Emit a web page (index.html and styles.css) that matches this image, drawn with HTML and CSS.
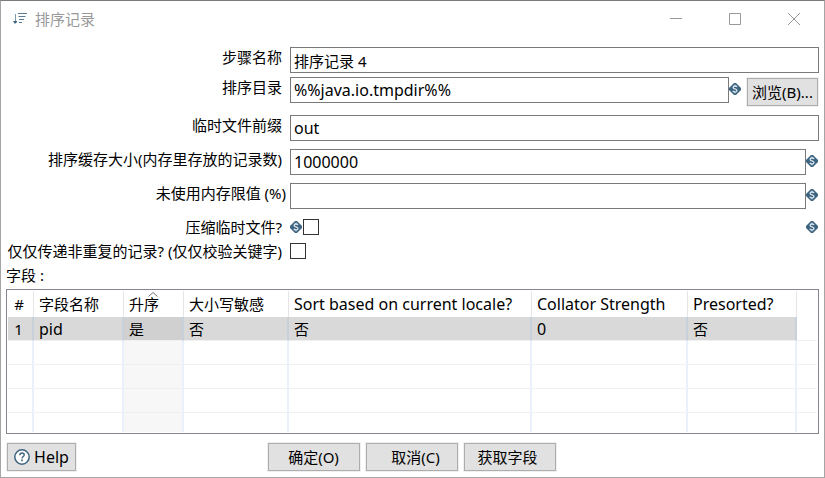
FILE: index.html
```html
<!DOCTYPE html>
<html lang="zh-CN">
<head>
    <meta charset="UTF-8">
    <meta name="viewport" content="width=device-width, initial-scale=1.0">
    <title>排序记录</title>
    <link rel="stylesheet" href="styles.css">
</head>
<body>

    <!-- Shared icon: variable marker -->
    <svg class="symbols" aria-hidden="true">
        <symbol id="var" viewBox="0 0 12 12">
            <path d="M5 0h2l5 5v2l-5 5H5L0 7V5z" fill="#3d6480"/>
            <path d="M8 4C7.600 3.200 6.900 3 6 3C4.900 3 4.100 3.500 4.100 4.400C4.100 6.300 8 5.500 8 7.500C8 8.500 7.100 9 6 9C5 9 4.200 8.600 3.900 7.800M6 1.800V3M6 9v1.200" fill="none" stroke="#dbe6ee" stroke-width="1.300"/>
        </symbol>
    </svg>

    <div class="dialog">
        <!-- Title bar -->
        <div class="titlebar">
            <svg class="app-icon" viewBox="0 0 14 12">
                <path d="M2.500 1v8.500" stroke="#7d9ab0" fill="none"/>
                <path d="M0 8h4v1L2.500 10.500h-1z" fill="#3d6480"/>
                <path d="M5 .5h9M5.500 3.500h7M6 6.500h5M6 9.500h3" stroke="#5b7c95" fill="none"/>
            </svg>
            <span class="title">排序记录</span>
            <button class="win-btn" aria-label="最小化"><svg viewBox="0 0 12 12"><path d="M0 5.500h12"/></svg></button>
            <button class="win-btn" aria-label="最大化"><svg viewBox="0 0 12 12"><path d="M.5.5h11v11H.5z"/></svg></button>
            <button class="win-btn" aria-label="关闭"><svg viewBox="0 0 12 12"><path d="M0 0l12 12M12 0L0 12"/></svg></button>
        </div>

        <!-- Step settings -->
        <div class="form">
            <div class="row row-tight">
                <label for="stepName">步骤名称</label>
                <input type="text" id="stepName" value="排序记录 4">
            </div>
            <div class="row">
                <label for="sortDir">排序目录</label>
                <input type="text" id="sortDir" class="latin" value="%%java.io.tmpdir%%">
                <svg class="var"><use href="#var"/></svg>
                <button class="btn browse">浏览(B)...</button>
            </div>
            <div class="row">
                <label for="prefix">临时文件前缀</label>
                <input type="text" id="prefix" class="latin" value="out">
            </div>
            <div class="row">
                <label for="sortSize">排序缓存大小(内存里存放的记录数)</label>
                <input type="text" id="sortSize" class="latin" value="1000000">
                <svg class="var var-end"><use href="#var"/></svg>
            </div>
            <div class="row">
                <label for="freeMem" class="wide">未使用内存限值 (%)</label>
                <input type="text" id="freeMem" class="latin" value="">
                <svg class="var var-end"><use href="#var"/></svg>
            </div>
            <div class="row row-check">
                <label for="compress">压缩临时文件?</label>
                <svg class="var"><use href="#var"/></svg>
                <input type="checkbox" id="compress">
                <svg class="var var-end"><use href="#var"/></svg>
            </div>
            <div class="row row-check">
                <label for="unique">仅仅传递非重复的记录? (仅仅校验关键字)</label>
                <input type="checkbox" id="unique">
            </div>
        </div>

        <!-- Fields grid -->
        <div class="caption" id="fieldsLabel">字段 :</div>
        <div class="grid-frame">
            <table class="grid" aria-labelledby="fieldsLabel">
                <colgroup>
                    <col class="c-num"><col class="c-name"><col class="c-asc"><col class="c-case">
                    <col class="c-locale"><col class="c-strength"><col class="c-presorted"><col>
                </colgroup>
                <thead>
                    <tr>
                        <th class="num">#</th>
                        <th>字段名称</th>
                        <th class="sorted">升序<svg class="sort-arrow" viewBox="0 0 10 5"><path d="M.5 4.500L5 .5l4.500 4"/></svg></th>
                        <th>大小写敏感</th>
                        <th class="latin">Sort based on current locale?</th>
                        <th class="latin">Collator Strength</th>
                        <th class="latin">Presorted?</th>
                        <th></th>
                    </tr>
                </thead>
                <tbody>
                    <tr class="selected">
                        <td class="num">1</td>
                        <td class="latin">pid</td>
                        <td class="sorted">是</td>
                        <td>否</td>
                        <td>否</td>
                        <td class="latin">0</td>
                        <td>否</td>
                        <td></td>
                    </tr>
                    <tr><td></td><td></td><td class="sorted"></td><td></td><td></td><td></td><td></td><td></td></tr>
                    <tr><td></td><td></td><td class="sorted"></td><td></td><td></td><td></td><td></td><td></td></tr>
                    <tr><td></td><td></td><td class="sorted"></td><td></td><td></td><td></td><td></td><td></td></tr>
                    <tr class="last"><td></td><td></td><td class="sorted"></td><td></td><td></td><td></td><td></td><td></td></tr>
                </tbody>
            </table>
        </div>

        <!-- Buttons -->
        <div class="footer">
            <button class="btn help latin">
                <svg viewBox="0 0 16 16">
                    <circle cx="8" cy="8" r="7.200" fill="#fff" stroke="#3d6480" stroke-width="1.500"/>
                    <path d="M5.800 6.200C5.800 4.800 6.700 4 8 4s2.200.8 2.200 2C10.200 7.500 8 7.600 8 9.500" fill="none" stroke="#3d6480" stroke-width="1.400"/>
                    <path d="M7.200 10.600h1.600v1.600H7.200z" fill="#3d6480"/>
                </svg>
                Help
            </button>
            <div class="actions">
                <button class="btn">确定(O)</button>
                <button class="btn cancel">取消(C)</button>
                <button class="btn fields">获取字段</button>
            </div>
        </div>
    </div>

</body>
</html>
```

FILE: styles.css
```css
* {
    box-sizing: border-box;
}

body {
    margin: 0;
    font-family: "Noto Sans", "Noto Sans CJK SC", sans-serif;
    font-size: 15px;
    line-height: 20px;
    color: #000;
    background: #fff;
}

button,
input {
    font: inherit;
    color: inherit;
}

.latin {
    font-size: 16px;
}

.symbols {
    display: none;
}

.dialog {
    min-height: 100vh;
    padding: 0 5px 5px;
    border: 1px solid #a5a5a5;
    border-top-color: #7b7b7b;
}

/* Title bar */
.titlebar {
    display: flex;
    align-items: center;
    height: 36px;
    margin-right: -4px;
    padding-left: 7px;
    color: #999;
}

.app-icon {
    width: 14px;
    height: 12px;
    margin-right: 8px;
}

.title {
    flex: 1;
}

.win-btn {
    display: flex;
    align-items: center;
    justify-content: center;
    width: 59px;
    height: 36px;
    padding: 0;
    border: 0;
    background: none;
}

.win-btn svg {
    width: 12px;
    height: 12px;
    fill: none;
    stroke: #999;
}

/* Form */
.form {
    padding-top: 10px;
}

.row {
    display: flex;
    align-items: flex-start;
    margin-bottom: 8px;
}

.row-tight {
    margin-bottom: 4px;
}

.row label {
    flex: none;
    width: 276px;
    margin-right: 8px;
    text-align: right;
    white-space: nowrap;
}

.row label.wide {
    width: 280px;
    margin-right: 4px;
}

.row input[type="text"] {
    flex: 1;
    min-width: 0;
    height: 26px;
    padding: 0 3px;
    border: 1px solid #7a7a7a;
    background: #fff;
}

.row-check {
    align-items: center;
    height: 20px;
    margin-bottom: 4px;
}

.row input[type="checkbox"] {
    appearance: none;
    width: 16px;
    height: 16px;
    margin: 0;
    border: 1px solid #333;
    background: #fff;
}

.row input[type="checkbox"]:checked {
    background: #3d6480;
}

.var {
    flex: none;
    width: 12px;
    height: 12px;
    margin-top: 6px;
}

.var-end {
    margin-right: 1px;
}

.row-check .var {
    margin-top: 0;
}

.row-check .var + input {
    margin-left: 1px;
}

.row-check .var-end {
    margin-left: auto;
}

/* Buttons */
.btn {
    height: 28px;
    margin: 1px;
    padding: 0;
    border: 1px solid #adadad;
    background: #e1e1e1;
    box-shadow: 0 0 0 1px #f0f0f0;
    white-space: nowrap;
}

.browse {
    width: 71px;
    margin-left: 6px;
}

/* Fields grid */
.caption {
    margin-bottom: 4px;
}

.grid-frame {
    padding: 1px;
    border: 1px solid #828790;
}

.grid {
    width: 100%;
    table-layout: fixed;
    border-collapse: separate;
    border-spacing: 0;
}

.c-num { width: 26px; }
.c-name { width: 90px; }
.c-asc { width: 60px; }
.c-case { width: 105px; }
.c-locale { width: 243px; }
.c-strength { width: 156px; }
.c-presorted { width: 109px; }

.grid th,
.grid td {
    padding: 0 0 0 5px;
    font-weight: normal;
    text-align: left;
    white-space: nowrap;
}

.grid th {
    position: relative;
    height: 26px;
    border-right: 1px solid #e5e5e5;
}

.grid td {
    height: 24px;
    border-right: 2px solid #ebf1fa;
    border-bottom: 1px solid #f0f0f0;
}

.grid th:last-child,
.grid td:last-child {
    border-right: 0;
}

.grid .num {
    padding: 0 3px 0 0;
    text-align: center;
}

.grid td.sorted {
    background: #f7f7f7;
}

.grid .selected td {
    background: #d9d9d9;
    border-right-color: #c8d0d9;
}

.grid .selected td.sorted {
    background: #d0d0d0;
}

.grid .selected td:last-child {
    background: #fff;
}

.grid .last td {
    height: 19px;
    border-bottom: 0;
}

.sort-arrow {
    position: absolute;
    top: 1px;
    left: 24px;
    width: 10px;
    height: 5px;
    fill: none;
    stroke: #777;
}

/* Footer */
.footer {
    display: grid;
    grid-template-columns: 1fr auto 1fr;
    margin-top: 8px;
    padding-right: 2px;
}

.help {
    display: flex;
    align-items: center;
    justify-content: center;
    justify-self: start;
    gap: 4px;
    width: 69px;
}

.help svg {
    width: 16px;
    height: 16px;
}

.actions {
    display: flex;
    gap: 4px;
}

.actions .btn {
    width: 92px;
}

.actions .cancel {
    padding-left: 8px;
}

.actions .fields {
    padding-right: 4px;
}
```
